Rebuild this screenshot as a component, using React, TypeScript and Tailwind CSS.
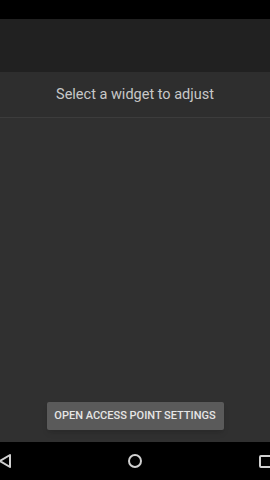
export default function App() {
  return (
    <div className="w-[270px] h-[480px] flex flex-col bg-[#303030] font-['Roboto',sans-serif] overflow-hidden">
      <div className="h-[19px] bg-black shrink-0" />
      <div className="h-[53px] bg-[#212121] shrink-0" />
      <div className="h-[46px] bg-[#2e2e2e] border-b border-[#3c3c3c] flex items-center justify-center shrink-0">
        <span className="text-[14.5px] text-[#c8c8c8]">Select a widget to adjust</span>
      </div>
      <div className="flex-1 flex flex-col items-center justify-end pb-[12px]">
        <button className="h-[28px] w-[177px] bg-[#5a5a5a] rounded-[2px] shadow-md text-[11px] font-medium text-[#e6e6e6]">
          OPEN ACCESS POINT SETTINGS
        </button>
      </div>
      <div className="h-[38px] bg-black shrink-0 flex items-center justify-between">
        <svg width="14" height="16" viewBox="0 0 14 16" className="-ml-[2px]">
          <path d="M12 2 L2 8 L12 14 Z" fill="none" stroke="#d0d0d0" strokeWidth="2" strokeLinejoin="round" />
        </svg>
        <svg width="16" height="16" viewBox="0 0 16 16">
          <circle cx="8" cy="8" r="6" fill="none" stroke="#d0d0d0" strokeWidth="2" />
        </svg>
        <svg width="14" height="14" viewBox="0 0 14 14" className="-mr-[2px]">
          <rect x="2" y="2" width="11" height="11" rx="1" fill="none" stroke="#d0d0d0" strokeWidth="2" />
        </svg>
      </div>
    </div>
  )
}
